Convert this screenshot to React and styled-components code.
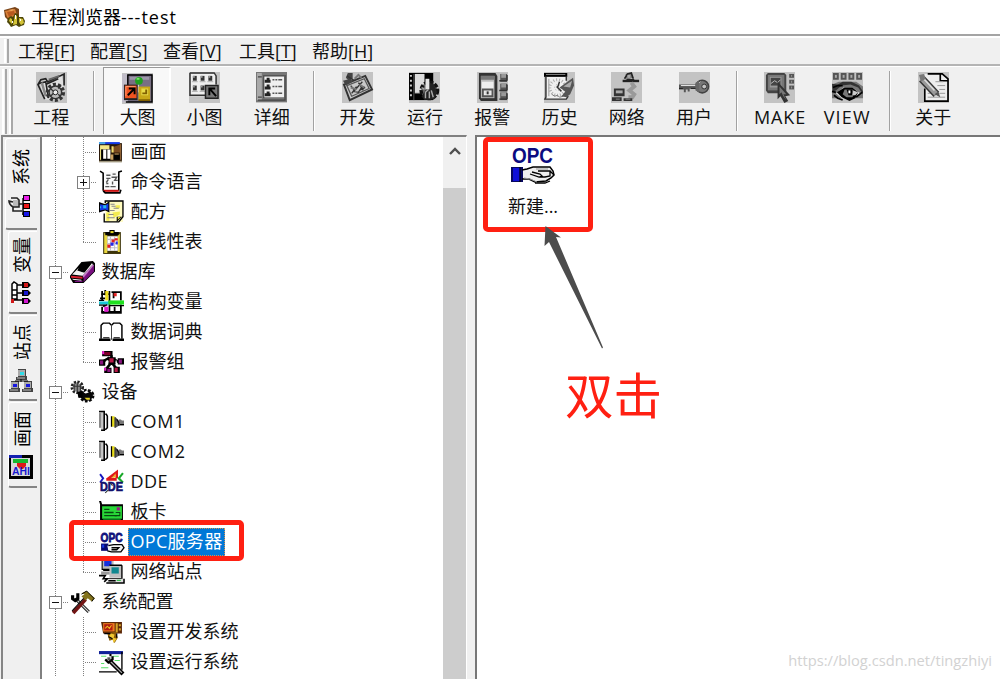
import React from 'react';
import styled, { createGlobalStyle, css } from 'styled-components';

const Global = createGlobalStyle`
  * { box-sizing: border-box; }
  body {
    margin: 0;
    background: #fff;
    color: #111;
    font-family: "Open Sans", "Noto Sans CJK SC", sans-serif;
    font-size: 18px;
    overflow: hidden;
  }
  svg { overflow: visible; }
`;

const cjk = '"Noto Sans CJK SC", sans-serif';

const Window = styled.div`
  position: relative;
  width: 1000px;
  height: 679px;
  display: flex;
  flex-direction: column;
  background: #f0f0f0;
  overflow: hidden;
`;

const TitleBar = styled.header`
  flex: 0 0 36px;
  display: flex;
  align-items: center;
  gap: 6px;
  padding: 0 0 1px 3px;
  background: #fff;
  border-bottom: 2px solid #a4a4a4;
  white-space: nowrap;
`;

const Title = styled.span`
  color: #000;
  line-height: 24px;
  font-size: 18px;
`;

const Latin = styled.span`
  letter-spacing: ${(p) => p.$track}px;
`;

const MenuBar = styled.nav`
  flex: 0 0 30px;
  display: flex;
  align-items: center;
  border-bottom: 2px solid #b4b4b4;
  box-shadow: inset 0 2px #fff;
`;

const Grip = styled.i`
  align-self: stretch;
  flex: 0 0 ${(p) => p.$w}px;
  border-left: 2px solid #fff;
  border-right: 2px solid #a8a8a8;
  margin: 3px 0 1px ${(p) => p.$ml}px;
`;

const MenuItem = styled.span`
  flex: 0 0 ${(p) => p.$w}px;
  line-height: 26px;
  padding-top: 1px;
  white-space: nowrap;
  u { text-decoration-thickness: 1px; text-underline-offset: 2px; }
`;

const MenuItems = styled.div`
  display: flex;
  margin-left: 9px;
`;

const ToolBar = styled.div`
  flex: 0 0 69px;
  display: flex;
  align-items: stretch;
  box-shadow: inset 0 1px #fff;
`;

const Tools = styled.div`
  display: flex;
  margin-left: 4.6px;
`;

const Tool = styled.div`
  width: 67.3px;
  display: flex;
  flex-direction: column;
  align-items: center;
  padding-top: 5px;
  margin: 1px 0;
  white-space: nowrap;
  ${(p) => p.$pressed && css`
    background: #f8f8f8;
    border-left: 1px solid #999;
    border-top: 1px solid #999;
    border-right: 2px solid #fff;
    padding-top: 5px;
    padding-left: 2px;
  `}
`;

const ToolLabel = styled.span`
  line-height: 26px;
  margin-top: ${(p) => (p.$pressed ? 0 : 1)}px;
  height: 26px;
  letter-spacing: ${(p) => p.$track || 0}px;
`;

const Separator = styled.i`
  width: 18.6px;
  margin: 5px 0 4px;
  background: linear-gradient(90deg, #a2a2a2 0 1px, #fff 1px 2px) 8px 0 / 2px 100% no-repeat;
`;

const Main = styled.main`
  flex: 1;
  min-height: 0;
  display: flex;
`;

const Tabs = styled.aside`
  flex: 0 0 40px;
  border-top: 2px solid #858585;
  border-left: 2px solid #858585;
  margin-left: 1px;
  display: flex;
  flex-direction: column;
  padding: 1px 4px 0 2px;
  gap: 1px;
`;

const Tab = styled.div`
  height: ${(p) => p.$h}px;
  margin-left: ${(p) => (p.$active ? 0 : 3)}px;
  padding-top: ${(p) => p.$pt}px;
  padding-right: ${(p) => (p.$active ? 3 : 4)}px;
  display: flex;
  flex-direction: column;
  align-items: center;
  gap: ${(p) => p.$gap}px;
  border-left: 1px solid #fff;
  border-top: 1px solid #fff;
  border-bottom: 2px solid #858585;
  border-radius: 3px 0 0 3px;
`;

const TabLabel = styled.span`
  height: 36px;
  width: 24px;
  line-height: 24px;
  writing-mode: vertical-rl;
  text-orientation: sideways;
  transform: rotate(180deg);
  font-family: ${cjk};
  color: #000;
`;

const TreePanel = styled.section`
  flex: 0 0 427px;
  display: flex;
  border-left: 2px solid #808080;
  border-top: 2px solid #808080;
  border-right: 1px solid #fff;
  margin-left: -1px;
  background: #fff;
`;

const Tree = styled.div`
  flex: 1;
`;

const Row = styled.div`
  height: 30px;
  display: flex;
  align-items: center;
  white-space: nowrap;
`;

const dotsV = 'repeating-linear-gradient(180deg, #808080 0 1px, #fff 1px 2px)';
const dotsH = 'repeating-linear-gradient(90deg, #808080 0 1px, #fff 1px 2px)';

const Guide = styled.span`
  width: ${(p) => p.$w}px;
  height: 30px;
  display: flex;
  align-items: center;
  padding-left: ${(p) => p.$x - 6}px;
  background-repeat: no-repeat;
  background-image: ${dotsV}, ${dotsH};
  background-position: ${(p) => p.$x}px 0, ${(p) => p.$x}px 15px;
  background-size: 1px ${(p) => p.$v}px, ${(p) => (p.$h ? 30 : 0)}px 1px;
`;

const Expander = styled.span`
  width: 13px;
  height: 13px;
  border: 1px solid #808080;
  background:
    linear-gradient(#111, #111) center / 7px 1px no-repeat,
    linear-gradient(#111, #111) center / 1px ${(p) => (p.$plus ? 7 : 1)}px no-repeat,
    #fff;
`;

const IconCell = styled.span`
  width: 25px;
  height: 26px;
  margin-left: 1.5px;
  display: flex;
  align-items: center;
`;

const Label = styled.span`
  margin-left: 4px;
  padding: 0 3px;
  line-height: 27px;
  height: 28px;
  letter-spacing: ${(p) => p.$track || 0}px;
  ${(p) => p.$sel && css`
    color: #fff;
    background: #0078d7;
    outline: 1px dotted #d89050;
    outline-offset: -1px;
  `}
`;

const Scroll = styled.div`
  flex: 0 0 23px;
  display: flex;
  flex-direction: column;
  background: #f0f0f0;
`;

const ScrollUp = styled.div`
  height: 51px;
  padding-top: 8px;
  text-align: center;
  line-height: 0;
`;

const Thumb = styled.div`
  flex: 1;
  background: #cdcdcd;
`;

const ListPanel = styled.section`
  flex: 1;
  margin-left: 8px;
  background: #fff;
  border-left: 2px solid #777;
  border-top: 2px solid #777;
`;

const ListItem = styled.div`
  width: 112px;
  padding-top: 8px;
  display: flex;
  flex-direction: column;
  align-items: center;
`;

const ItemLabel = styled.span`
  margin-top: 6px;
  line-height: 26px;
`;

const Highlight = styled.div`
  position: absolute;
  left: ${(p) => p.$x}px;
  top: ${(p) => p.$y}px;
  width: ${(p) => p.$w}px;
  height: ${(p) => p.$h}px;
  border: 5px solid #ff2012;
  border-radius: 5px;
`;

const Arrow = styled.svg`
  position: absolute;
  left: 540px;
  top: 222px;
`;

const Note = styled.div`
  position: absolute;
  left: 565px;
  top: 358px;
  font: 48.5px/70px ${cjk};
  color: #ff2012;
`;

const Watermark = styled.div`
  position: absolute;
  right: 8px;
  bottom: 8px;
  font-size: 14.7px;
  line-height: 22px;
  color: #d2d2d2;
`;

/* Filled shape and stroked shape, the two building blocks of every icon. */
const F = ({ c = '#000', d }) => <path fill={c} d={d} />;
const S = ({ c = '#000', w = 1, d }) => <path fill="none" stroke={c} strokeWidth={w} d={d} />;

const treeIcons = {
  picture: <>
    <F c="#2a1808" d="M0 3h22v18H0z" /><F c="#1238e8" d="M0 2h20v2H0z" /><F c="#48a8e8" d="M0 2h6v2H0z" />
    <F c="#f4e888" d="M1 5h9v14H1z" /><F d="M2 9h9v11H2z" /><F c="#fff" d="M4 9h3v9H4zM8 9h3v9H8z" />
    <F c="#7a4a20" d="M13 7l8-3v8h-8z" /><F c="#9a6a38" d="M20 4h1v15h-1z" /><F c="#c8a060" d="M11 14h3v5h-3zM15 13h4v2h-4z" /><F d="M14 14h6v5h-6z" /><F c="#f0dc70" d="M12 6h2v6h-2z" /><F c="#a09880" d="M0 20h22v1.500H0z" />
  </>,
  script: <>
    <F c="#fafafa" d="M3 2h15v18H5z" /><S w="1.5" d="M1 1l3 2v17M19 20V2l3-1" />
    <S c="#555" w="1.3" d="M7 5h4M13 4h3M7 8h4M9 9l-2 3M12 7h5l-2 3h3M7 13h2M13 11v3M6 16h4M11 16h5" /><F c="#c81010" d="M4 19h15v2H4z" /><S w="1.6" d="M4 20l2 2h14l1-3" />
  </>,
  recipe: <>
    <F c="#fffbc0" d="M6 1h17v20H6z" /><S w="1.3" d="M6 3V1h17v15l-4 5H5v-8" /><F c="#f4ec50" d="M7 12h3v8H7zM13 12l7-1v3l-6 3zM16 5h4v3h-4z" />
    <F d="M0 2l6 2 4-3v11l-4-2-6 2z" /><F c="#1238e8" d="M1 4l5 1 3-2v7l-3-1-5 1z" /><F c="#28b8e8" d="M4 5h3v3H4zM1 6h1v2H1z" />
    <S c="#888" d="M11 4h4M12 6h4M14 8h5M10 10h5M9 14h5M8 17h7" /><F d="M17 16h5l-5 5z" /><F c="#e8dc30" d="M18 16h3l-3 3z" />
  </>,
  clipboard: <>
    <F c="#3d3408" d="M4 2h17v21H4z" /><F c="#ead840" d="M5 3h3v19H5zM18 4h2v17h-2z" /><F c="#fff" d="M8 6h10v14H8z" />
    <F d="M6 2h4V0h5v2h4v3H6z" /><F c="#ddd020" d="M11 1h3v2h-3z" /><S c="#c0c0cc" d="M8 9h10M8 13h10M8 17h10M11 6v14M15 6v14" />
    <F c="#e02020" d="M8 14h3v3H8zM12 9h3v3h-3zM15 8h3v2h-3z" /><F c="#2428e8" d="M11 12h3v3h-3zM16 11h2v3h-2z" />
  </>,
  database: <>
    <F d="M0 15L6 8l5-6 11-1 2 2v8L13 22H3l-3-5z" /><F c="#7a1080" d="M13 16L23 5v6L13 21z" /><F c="#c878c8" d="M12 15L22 4l1 1L13 17z" />
    <F c="#f2f2f2" d="M2 14l6-6 3 3 3 1 7-9 1 1-10 11z" /><F d="M11 3h9l-7 9-6-2z" /><F c="#d82030" d="M1 15l11 1v2L1 17z" /><F c="#fff" d="M2 18l9 1v1l-8-1z" /><F c="#7a1080" d="M4 20h8v1H5z" />
  </>,
  structure: <>
    <F c="#fff" d="M2 2h19v20H2z" /><S w="1.7" d="M3 1v9M10 1v21M2 4h8M3 16v6h18v-8M14 2v6M12 2h9v8M15 16v6M2 21h19M1 8h5M6 0v5" />
    <F c="#f0e020" d="M6 1h3v9H6z" /><F c="#e02020" d="M14 3h3v3h-3z" /><F c="#18c8d8" d="M0 11h10v3H0z" /><F c="#20e020" d="M9 10h15v4H9z" />
    <F c="#e020d0" d="M5 16h4v5H5z" /><S w="1.3" d="M0 10h5M0 14.500h8M10 15h14M4 16l4-2" />
  </>,
  book: <>
    <F c="#fff" d="M2 4l8-1 2 2 2-2 8 1v16H2z" /><S w="1.4" d="M2 18V5l2-2h6l2 2 2-2h6l2 2v13" /><S w="1" c="#444" d="M12 4v15" /><S w="2.4" d="M0 19h11M13 19h11" /><S d="M4 17h6M14 17h6" />
  </>,
  alarm: <>
    <S w="2.6" d="M8 7l4 5M12 5v8M4 11l5-3 5 1 6 3M7 18l5-6 5 6" /><F d="M3 1h10v5H3zM0 9h6v6H0zM9 7h7v7H9zM18 8h6v6h-6zM5 17h7v5H5zM14 16h6v6h-6z" />
    <F c="#800028" d="M5 2h6v3H5z" /><F c="#e820c8" d="M3 1h2v3H3zM5 17h2v3H5z" /><F c="#8a1480" d="M1 10h3v4H1zM19 9h3v4h-3zM8 18h3v3H8z" /><F c="#b81848" d="M10 8h4v4h-4zM15 17h3v4h-3z" /><F c="#fff" d="M7 10h2v2H7zM16 10h1v3h-1z" />
  </>,
  device: <>
    <g fill="none" stroke="#222" strokeWidth="3" strokeDasharray="2 1.300"><circle cx="7" cy="7" r="5" /></g><circle cx="7" cy="7" r="4" fill="#888" /><S c="#333" d="M4 3v7M7 2v9M10 4v6M3 6h8" />
    <g fill="#080808" stroke="#080808" strokeWidth="3" strokeDasharray="2.4 1.4"><ellipse cx="16" cy="15" rx="6" ry="5" /></g>
    <F c="#e8d828" d="M14 17h5v2h-3z" /><F c="#fff" d="M13 12l3-2 2 2-3 1z" /><F d="M7 11h5v6H8z" />
  </>,
  com: <>
    <F c="#c8c8c8" d="M0 2h5v18H2v-3H0z" /><S w="1.5" d="M0 1.500h5v18H2M6 4h1l1 2v11l-2 2" /><F c="#888" d="M0 3h2v14H0z" />
    <F c="#e8dc18" d="M12 6h3v10h-3z" /><S w="1.2" d="M12 6v10M15.500 7v10" /><F c="#555" d="M16 7l3 3v5l-3 2z" /><F c="#777" d="M19 9h2l1 1h2v5h-5z" /><S d="M17 9l2 3v3M20 14h4" />
  </>,
  dde: <>
    <S c="#1818c0" w="1.8" d="M1 4l3 4-3 4" /><S c="#e01818" w="2.5" d="M8 9l9-7v6M7 9h10" /><F c="#f0b020" d="M12 8l4-5v4z" /><S c="#18a828" w="2" d="M23 3l-4 5 4 4" />
    <text x="1" y="20" fontFamily="Liberation Sans" fontSize="11.5" fontWeight="bold" fill="#10106c" stroke="#10106c" strokeWidth=".6" textLength="22" lengthAdjust="spacingAndGlyphs">DDE</text><S c="#333" d="M9 19l-3 3M10 12l3 3" />
  </>,
  card: <>
    <F d="M0 1h2l1 3h20v17H3v2H1V4z" /><F c="#28d838" d="M3 6h19v12H3z" /><S c="#064810" w="1.3" d="M5 9h5M5 12h9M5 15h12" /><F c="#a01880" d="M17 7h3v3h-3z" /><S c="#064810" d="M16 12h4v3h-5" /><F c="#118820" d="M4 18h17v1H4z" />
  </>,
  opc: <>
    <text x="1.5" y="11.5" fontFamily="Liberation Sans" fontSize="12" fontWeight="bold" fill="#10107c" stroke="#10107c" strokeWidth=".8" textLength="21" lengthAdjust="spacingAndGlyphs">OPC</text>
    <F c="#080870" d="M2 13h7v7H2z" /><F c="#1838e8" d="M3 14h2v3H3z" /><F c="#f4f4f4" d="M8 15l8-1 7 2-2 5-7 2-5-3z" /><S w="1.3" d="M9 15l5-1h8l2 3-3 4H12l-4-1M12 17h7l-2 2h-5M14 21h6" />
  </>,
  network: <>
    <F c="#b8b8b8" d="M3 0h11v9H3z" /><F c="#1430e0" d="M5 1h7v5H5z" /><S d="M3 0v9h10M4 10h7" /><F c="#999" d="M2 11h9v3H2z" />
    <F c="#c0c0c0" d="M10 5h12v12H10z" /><F c="#108890" d="M12 7h7v6h-7z" /><S w="1.3" d="M22 5v13H9M10 5h12" /><F c="#ddd" d="M8 18h15v4H8z" /><S w="1.5" d="M7 22h17v-4M0 15h6l-2 3h4l-3 3M9 20h7" /><F c="#20b838" d="M17 19h4v1h-4z" />
  </>,
  tools: <>
    <S c="#222" w="3" d="M5 8l13 13" /><S c="#ddd" w="1" d="M6 9l12 12" /><S c="#721414" w="3.5" d="M3 22L15 9" /><S d="M2 20L14 7" /><F d="M1 5h3v3h2V3h3v6l-4 3-4-3z" />
    <F c="#82721c" d="M11 3l5-2 8 7-3 3-4-3-2 2-4-4 3-2z" /><S w=".9" d="M11 4l5-3 7 7-2 3" />
  </>,
  devConfig: <>
    <F c="#5c2808" d="M2 2h20v11H4z" /><F c="#ee7c20" d="M4 3h11v8H4z" /><F c="#b01c10" d="M5 4h8v6H5z" /><S c="#f0c020" d="M6 8l2-2 2 2 2-3" /><F c="#d6a428" d="M16 3h2v9h-2zM19 4h2v2h-2zM19 8h2v2h-2z" />
    <F c="#8a5a08" d="M8 13l8-2 2 6-3 5-2-3-3 1z" /><F c="#f0c830" d="M11 13l4 1-1 3 3 1-3 4-1-4-4-1z" /><S w="1.2" d="M5 13h6M17 13v4M9 16l4 2" />
  </>,
  runConfig: <>
    <F c="#fff" d="M0 2h23v19H0z" /><F c="#102098" d="M0 1h23v3H0z" /><S w="1.3" d="M22 2v17M0 21h17" /><S c="#58e068" d="M2 6h5M13 6h6M2 17h7M15 10h5M2 13h3" />
    <S w="4" d="M10 10l13 13" /><S c="#aaa" w="1.2" d="M11 11l11 11" /><S w="2.2" d="M6 9l3 3 4-3V6M10 5h2" /><F c="#555" d="M8 7h3v3H8z" />
  </>,
};

const TreeIcon = ({ name }) => <svg width="25" height="25" viewBox="0 0 24 24">{treeIcons[name]}</svg>;

const toolIcons = {
  project: <>
    <F c="#e0e0e0" d="M4 11l14-6 8-3 4 17-16 10-6-1z" /><S c="#222" w="1.700" d="M9 28L2 13l3-5 5-1 2 3 17-8v12M3 12l7-2 3 17M10 13l13-6" /><S c="#888" w="2.500" d="M6 11l4 14" /><S c="#666" w="2" d="M13 8l11-4" />
    <circle cx="20" cy="21" r="8" fill="none" stroke="#333" strokeWidth="4" strokeDasharray="3 2" /><circle cx="20" cy="21" r="6.500" fill="#bbb" stroke="#333" strokeWidth="1.500" /><circle cx="20" cy="21" r="2.5" fill="#eee" stroke="#222" /><S c="#333" w="1.300" d="M15 17l3 3M23 17l3-3M15 25l3-3M23 23l2 2" />
  </>,
  large: <>
    <F c="#c0bcc8" d="M0 1h7v29H0z" /><F c="#787084" d="M6 1h25v29H6z" /><S w="1.5" d="M6 18V2h25v28H4" /><F c="#9d96aa" d="M8 4h20v3H8z" /><S c="#d6d0dd" d="M17 11v9" />
    <circle cx="17.5" cy="8" r="4" fill="#20a020" /><F c="#75e868" d="M15 5h3v2h-3z" /><F c="#222" d="M2 12h14v16H2z" /><F c="#ef5320" d="M3 13h12v13H3z" /><S c="#ff9b70" d="M4 24V14h10" /><S w="2" d="M6 23l6-6M7 16h6v6" />
    <F c="#c8a818" d="M17 14h12v14H17z" /><F c="#e9da48" d="M20 16h7v7h-7z" /><S c="#806000" w="2" d="M21 21h4v-4M17 28h12" />
  </>,
  small: <>
    <F c="#eee" d="M2 2h25v23H2z" /><S c="#333" w="1.5" d="M1 1h25l2 3v9M1 1v23h16" />
    {[5, 13, 21].map((x) => [4, 14].map((y) => <g key={`${x}-${y}`}><F c="#333" d={`M${x - 1} ${y}h4v5h-4z`} /><F c="#999" d={`M${x - 1} ${y}h2v2h-2z`} /><S c="#aaa" d={`M${x - 2} ${y + 6}h6`} /></g>))}
    <F c="#777" d="M17 14h13v13H17z" /><S c="#222" w="1.5" d="M17 14h13v13H17z" /><S w="2" d="M21 17l7 8M21 24v-7h6" />
  </>,
  detail: <>
    <F c="#777" d="M0 0h32v31H0z" /><F c="#a9a9a9" d="M1 1h5v28H1z" /><F c="#f0f0f0" d="M8 4h21v22H8z" /><S c="#444" w="1.2" d="M8 27V4h21M2 5h4M2 26h4M30 3v26H2" />
    {[6, 13, 20].map((y) => <g key={y}><F c="#222" d={`M11 ${y}h3v2h1v3h-6v-3h2z`} /><S c="#555" w="1.5" d={`M17 ${y + 2}h2M20 ${y + 2}h2M23 ${y + 2}h4`} /></g>)}
  </>,
  develop: <>
    <F c="#c8c8c8" d="M2 13l22-9 7 14L8 29z" /><S c="#333" w="2" d="M2 13l22-9 7 14L8 29z" /><S c="#555" w="1.300" d="M5 14l18-7 5 10-18 8z" /><F c="#444" d="M6 1h5v6l-4 2-3-3zM1 9l8-2 2 3-7 4z" />
    <S c="#333" w="1.4" d="M5 4l8 5M9 14l4 5 8-9M12 20l5 1 3-5 3-1M17 11l5 8M10 22l5-7M18 19l6-3" /><S c="#777" w="2" d="M13 7l4-4 3 3M9 16l6 2M18 13l5 3" />
  </>,
  run: <>
    <F d="M0 1h25v28H0z" /><F c="#ddd" d="M6 2h10v20H6z" /><S c="#ccc" w="2" d="M1 4h2M1 9h2M1 14h2M1 19h2M1 24h2" /><S c="#555" d="M5 2v27M6 22h9" />
    <circle cx="21" cy="19" r="8.5" fill="#666" stroke="#111" strokeWidth="3.5" strokeDasharray="4 1.7" /><F c="#222" d="M21 11l5 2 3 8-3 7-10 1-3-4 4-6z" /><F c="#e6e6e6" d="M17 7h4v11h-4z" /><S c="#aaa" w="1.5" d="M17 27v-6l3-3M21 27v-7M25 26l-2-7M13 16l3 2" />
  </>,
  warn: <>
    <F c="#333" d="M2 1h17l2 3v26H4l-2-3z" /><F c="#bcbcbc" d="M4 4h14v23H4z" /><F c="#777" d="M4 4h14v4H4z" /><F c="#eee" d="M5 10h12v15H5z" /><S c="#555" w="2" d="M6 18h10v7H6z" /><F c="#ddd" d="M8 20h6v3H8z" /><F c="#333" d="M10 20h2v3h-2z" />
    {[2, 12, 21].map((y) => <g key={y}><F c="#555" d={`M24 ${y}h7v8h-7z`} /><F c="#999" d={`M25 ${y}h5v4h-5z`} /><S c="#333" w="1.5" d={`M23 ${y + 7}h8M31 ${y + 1}v6`} /></g>)}
  </>,
  history: <>
    <F c="#f0f0f0" d="M2 3h21v25H2z" /><F d="M0 1h24v4H0z" /><F c="#888" d="M2 2h20v1H2z" /><S c="#333" w="1.5" d="M2 5v21l-1 2h22l2-3M23 5v4" /><S c="#999" d="M5 7v18" />
    <g fill="none" stroke="#aaa" strokeDasharray="1 2"><circle cx="14" cy="16" r="8" strokeWidth="3" /><circle cx="14" cy="16" r="3" /></g><S c="#777" d="M8 23l3 2 3-1 2 2 4-1" />
    <F c="#555" d="M16 16L30 6l1 8-4 9-4 3-5-1 4-5z" /><F c="#aaa" d="M20 15l9-6-2 7z" /><S c="#333" w="1.5" d="M13 15l5 5M16 10l-2 6" />
  </>,
  net: <>
    <F c="#777" d="M15 2l6-1 2 5-7 2z" /><F c="#222" d="M12 8h17v2.500H12z" /><S c="#222" w="1.7" d="M14 7l3-5 4-1 2 6M16 8h8" /><F c="#aaa" d="M17 3h3v3h-3z" />
    <S c="#999" w="4" d="M21 11l3 4-5 4 5 4-2 3h-4" /><F c="#333" d="M3 17h11v8H3zM1 26h10v4H1zM13 27h9v3h-9z" /><F c="#aaa" d="M5 19h7v3H5z" /><S c="#888" d="M5 28h4M15 28h5" />
  </>,
  key: <>
    <circle cx="24" cy="15" r="6.5" fill="#777" stroke="#444" strokeWidth="1.7" /><circle cx="26" cy="15" r="2.5" fill="#c4c4c4" stroke="#333" /><F c="#555" d="M0 13h18v4H11v3H9v-2H7v3H5v-3H0z" /><S c="#eee" d="M2 14h15M20 12l2-2" /><S c="#222" d="M0 17h4M12 17h7" /><F c="#666" d="M17 11l4-2v12l-4-2z" />
  </>,
  make: <>
    <F c="#444" d="M4 1h17l2 2v17l-4 2H4l-2-3V3z" /><F c="#777" d="M4 3h17v16H4z" /><F c="#999" d="M6 5h12v11H6z" /><F c="#444" d="M7 6h10v8H7z" /><S c="#bbb" d="M7 12l4-3 3 2 3-3" />
    {[2, 8, 14].map((y) => <g key={y}><F c="#555" d={`M26 ${y}h5v4h-5z`} /><F c="#999" d={`M28 ${y + 1}h1v2h-1z`} /></g>)}<F c="#333" d="M14 10l13 14-5 1 3 5-4 2-4-7-3 3z" /><F c="#777" d="M16 15l7 8h-3l3 6-3-4-2-4-2 2z" />
  </>,
  view: <>
    {[1, 9, 17, 25].map((x) => <g key={x}><F c="#555" d={`M${x} 1h6v7h-6z`} /><F c="#aaa" d={`M${x + 2} 3h2v3h-2z`} /></g>)}
    <F c="#777" d="M0 13l7-3h18l7 5v12H0z" /><F c="#333" d="M0 12l6 1 5-3h9l8 4 4 6v3l-5-7-8-3-9 1-6 5-3 1z" /><F c="#ddd" d="M4 22l8-6h9l8 6-9 6-10-1z" /><F d="M5 21l8-5h8l6 5-3 6-6 3-8-4z" /><F c="#777" d="M13 18h8l3 3-3 5h-6l-4-3z" /><F d="M15 18h6v6h-4z" /><F c="#fff" d="M17 19h2v3h-2z" /><F c="#ccc" d="M22 19l5 2-3 3h-3z" /><S w="1.700" d="M1 16l5-2h5M2 24l4 3 5 2M25 26l6-5M0 20l4 1" />
  </>,
  about: <>
    <F c="#eee" d="M7 2h18l5 5v23H7z" /><S w="1.7" d="M7 17v13h24V7l-6-5H10M23 2v7h8" /><S c="#999" d="M18 10h8M20 14h8M22 18h6M22 22h6M10 26h18M10 22h3" />
    <S c="#333" w="8" d="M4 7l15 16" /><S c="#999" w="5" d="M4 7l15 16" /><S c="#ddd" w="1.5" d="M4 5l13 14" /><F c="#555" d="M17 23l4-3 2 6z" /><F c="#777" d="M1 3l5-1 2 5-5 3z" />
  </>,
};

const ToolIcon = ({ name }) => (
  <svg width="31" height="31" viewBox="0 0 32 32">
    <rect width="32" height="32" fill="#c3c3c3" />
    {toolIcons[name]}
  </svg>
);

const AppIcon = () => (
  <svg width="22" height="20" viewBox="0 0 22 20">
    <F c="#7a4418" d="M1 3l11-3 4 2v8l-5 4-6-1-3-3z" /><F c="#d98038" d="M2 4l10-2 2 6-8 4-2-2z" /><F c="#b85a20" d="M4 5l7-1 1 3-6 3z" /><F c="#f0a860" d="M5 3l6-1-2 2z" />
    <F c="#4d4608" d="M5 11l3-2 2 1 2-4 3 1 1 3h4l2 4-1 4-3 1-2 1-3-2-5 2-2-3-2-2z" /><F c="#d4c438" d="M7 11l2 1v5l-3-3zM12 8l2 1v8l-4 1 1-5zM16 11l4 1 1 4-3 2-2-3z" /><F c="#fff" d="M12 8h1v4h-1zM17 12h1v2h-1zM9 14h1v2H9z" />
  </svg>
);

const tabIcons = {
  system: <>
    <F c="#bbb" d="M5 5h5v7H5z" /><S c="#222" w="1.600" d="M3 3h6l2 2v7H5C2 10 1 8 1 6l4 1M5 12v4h9M11 9h4M15 3v17M15 3h2M15 11h2M14 19h3" />
    <F d="M15 0h7v6h-7zM15 8h7v6h-7zM15 16h7v6h-7z" /><F c="#e820e8" d="M16 1h5v4h-5z" /><F c="#e81818" d="M16 9h5v4h-5z" /><F c="#1818e8" d="M16 17h5v4h-5z" />
  </>,
  variable: <>
    <F c="#fff" d="M3 2h5v19H3z" /><S w="1.5" d="M3 3l2-2 3 2v15H3zM3 9h5M3 14h5M8 4h7M8 12h7M3 19h14" />
    <F d="M13 1h6l3 3-3 3h-6zM13 9h6l3 3-3 3h-6zM13 17h6l3 3-3 3h-6z" /><F c="#d01818" d="M15 2h4v4h-4zM2 18h3v4H2z" /><F c="#1818d0" d="M15 10h4v4h-4z" /><F c="#d018d0" d="M15 18h4v4h-4z" />
  </>,
  station: <>
    {[[7, 0, '#30dce8'], [0, 12, '#1818e0'], [13, 12, '#1818e0']].map(([x, y, c]) => <g key={x}><F c="#444" d={`M${x + 2} ${y}h8v7h1v4H${x}v-3h2z`} /><F c="#aaa" d={`M${x + 2} ${y + 1}h7v6h-7z`} /><F c={c} d={`M${x + 4} ${y + 3}h4v3h-4z`} /><S c="#bbb" d={`M${x + 1} ${y + 9}h8`} /></g>)}
    <S d="M12 10v3M6 12h13" />
  </>,
  screen: <>
    <F d="M0 0h24v24H0z" /><F c="#d8d8d8" d="M2 3h19v18H2z" /><F c="#1420b0" d="M0 0h13v3H0z" /><F c="#18b830" d="M4 4h15v4H4z" /><F c="#e01818" d="M8 8h9v3l-3 3h-3l-3-3z" />
    <text x="3" y="20" fontFamily="Liberation Sans" fontSize="10" fontWeight="bold" fill="#1818d0" textLength="18" lengthAdjust="spacingAndGlyphs">AHI</text>
  </>,
};

const TabIcon = ({ name }) => <svg width="24" height="24" viewBox="0 0 24 24">{tabIcons[name]}</svg>;

const OpcIcon = () => (
  <svg width="46" height="42" viewBox="0 0 46 42">
    <text x="2" y="18" fontFamily="Liberation Sans" fontSize="22.5" fontWeight="bold" fill="#0b0b80" textLength="41" lengthAdjust="spacingAndGlyphs">OPC</text>
    <F c="#080860" d="M1 22h12v15H1z" /><F c="#1010d8" d="M3 23h7v13H3z" /><S w="1.2" d="M10 22v15" /><F c="#eee" d="M13 24l11-2h15l5 8-8 6-11 1-12-4z" />
    <S w="1.5" d="M12 25l5-1 6-2h17l3 4 1 4-3 3-5 3-11 1-6-3h-7" /><S w="1.3" d="M22 27l8 2 2 2-3 1-9-3M28 26h12v5l-5 1h-5M40 26l4 4M25 38h10l5-2" /><S c="#999" d="M14 33l6 1 7 3M26 24h12" />
  </svg>
);

const menus = [['工程', 'F', 72], ['配置', 'S', 73], ['查看', 'V', 76], ['工具', 'T', 73], ['帮助', 'H', 70]];

const tools = [
  ['project', '工程'], null,
  ['large', '大图', true], ['small', '小图'], ['detail', '详细'], null,
  ['develop', '开发'], ['run', '运行'], ['warn', '报警'], ['history', '历史'], ['net', '网络'], ['key', '用户'], null,
  ['make', 'MAKE', false, 0.9], ['view', 'VIEW', false, 1.2], null,
  ['about', '关于'],
];

const tabs = [
  { name: 'system', text: '系统', h: 92, pt: 10, gap: 10, active: true },
  { name: 'variable', text: '变量', h: 83, pt: 5, gap: 8 },
  { name: 'station', text: '站点', h: 86, pt: 8, gap: 9 },
  { name: 'screen', text: '画面', h: 86, pt: 8, gap: 8 },
];

const rows = [
  ['picture', '画面'],
  ['script', '命令语言', { plus: true }],
  ['recipe', '配方'],
  ['clipboard', '非线性表', { last: true }],
  ['database', '数据库', { top: true }],
  ['structure', '结构变量'],
  ['book', '数据词典'],
  ['alarm', '报警组', { last: true }],
  ['device', '设备', { top: true }],
  ['com', 'COM1', { track: 0.7 }],
  ['com', 'COM2', { track: 0.9 }],
  ['dde', 'DDE', { track: 0.4 }],
  ['card', '板卡'],
  ['opc', 'OPC服务器', { sel: true, track: 0.3 }],
  ['network', '网络站点', { last: true }],
  ['tools', '系统配置', { top: true }],
  ['devConfig', '设置开发系统'],
  ['runConfig', '设置运行系统'],
];

function TreeRow({ icon, text, top, plus, last, sel, track }) {
  return (
    <Row>
      <Guide $w={26} $x={13} $v={30} $h={top}>{top && <Expander />}</Guide>
      {!top && <Guide $w={29} $x={15} $v={last ? 15 : 30} $h>{plus && <Expander $plus />}</Guide>}
      <IconCell><TreeIcon name={icon} /></IconCell>
      <Label $sel={sel} $track={track}>{text}</Label>
    </Row>
  );
}

export default function App() {
  return (
    <Window>
      <Global />
      <TitleBar><AppIcon /><Title>工程浏览器<Latin $track={1}>---test</Latin></Title></TitleBar>
      <MenuBar>
        <Grip $w={5} $ml={4} />
        <MenuItems>
          {menus.map(([text, key, w]) => <MenuItem key={key} $w={w}>{text}[<u>{key}</u>]</MenuItem>)}
        </MenuItems>
      </MenuBar>
      <ToolBar>
        <Grip $w={5} $ml={2} /><Grip $w={4} $ml={2} />
        <Tools>
          {tools.map((t, i) => (t ? (
            <Tool key={t[0]} $pressed={t[2]}><ToolIcon name={t[0]} /><ToolLabel $pressed={t[2]} $track={t[3]}>{t[1]}</ToolLabel></Tool>
          ) : <Separator key={i} />))}
        </Tools>
      </ToolBar>
      <Main>
        <Tabs>
          {tabs.map((t) => (
            <Tab key={t.name} $h={t.h} $pt={t.pt} $gap={t.gap} $active={t.active}>
              <TabLabel>{t.text}</TabLabel><TabIcon name={t.name} />
            </Tab>
          ))}
        </Tabs>
        <TreePanel>
          <Tree>
            {rows.map(([icon, text, opts]) => <TreeRow key={text} icon={icon} text={text} {...opts} />)}
          </Tree>
          <Scroll>
            <ScrollUp><svg width="14" height="12" viewBox="0 0 14 12"><S c="#505050" w="2.4" d="M2 9l5-5 5 5" /></svg></ScrollUp>
            <Thumb />
          </Scroll>
        </TreePanel>
        <ListPanel>
          <ListItem><OpcIcon /><ItemLabel>新建...</ItemLabel></ListItem>
        </ListPanel>
      </Main>
      <Highlight $x={69} $y={520} $w={175} $h={41} />
      <Highlight $x={483} $y={137} $w={110} $h={95} />
      <Arrow width="66" height="130"><F c="#4c4c4c" d="M5.5 4L21 15.500l-5 -.5L63 125.500l-1 1L9 20l-4.500 4z" /></Arrow>
      <Note>双击</Note>
      <Watermark>https://blog.csdn.net/tingzhiyi</Watermark>
    </Window>
  );
}
